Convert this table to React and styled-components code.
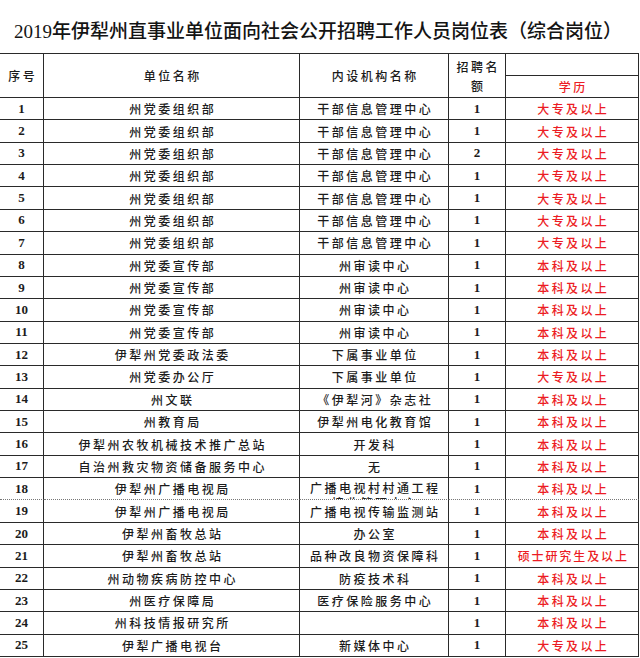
import React from "react";
import styled, { createGlobalStyle } from "styled-components";

const Global = createGlobalStyle`
  html, body { margin: 0; padding: 0; background: #fff; }
  body { width: 640px; height: 658px; overflow: hidden; }
`;

const COLS = "44px 256px 149px 57px 133px";
const ROW_H = 22.36;
const CJK = `"Noto Sans CJK SC", "Noto Sans", sans-serif`;
const NUM = `"Liberation Serif", "Noto Sans CJK SC", serif`;

const Page = styled.div`
  width: 640px;
  height: 658px;
  overflow: hidden;
  background: #fff;
`;

const Title = styled.h1`
  margin: 0;
  height: 53px;
  box-sizing: border-box;
  padding-top: 6px;
  padding-right: 4px;
  display: flex;
  align-items: center;
  justify-content: center;
  font-family: "Liberation Serif", "Noto Sans CJK SC", serif;
  font-size: 19px;
  font-weight: 500;
  color: #141414;
  white-space: nowrap;
`;

const Table = styled.div`
  width: 639px;
  border-top: 1px solid #2a2a2a;
`;

const HeaderRow = styled.div`
  display: grid;
  grid-template-columns: ${COLS};
  height: 44px;
`;

const Row = styled.div`
  display: grid;
  grid-template-columns: ${COLS};
  height: ${ROW_H}px;
`;

const Cell = styled.div`
  box-sizing: border-box;
  border-right: 1px solid #2a2a2a;
  border-bottom: 1px ${(p) => (p.$dotted ? "dotted #777" : "solid #2a2a2a")};
  display: flex;
  flex-direction: column;
  align-items: center;
  justify-content: ${(p) => (p.$top ? "flex-start" : "center")};
  overflow: hidden;
  min-width: 0;
  font-family: ${(p) => (p.$num ? NUM : CJK)};
  font-size: ${(p) => (p.$num ? "13px" : "12px")};
  font-weight: ${(p) => (p.$num ? 700 : 500)};
  letter-spacing: ${(p) => (p.$num ? "0" : "2.5px")};
  color: ${(p) => (p.$red ? "#ec1c24" : "#1b1b1b")};
  text-align: center;
  line-height: ${(p) => (p.$top ? "15px" : "normal")};
  padding-top: ${(p) => (p.$top ? "2px" : "0")};
  padding-left: ${(p) => (p.$num ? "0" : "2.5px")};
  white-space: nowrap;
`;

const HeadCell = styled(Cell)`
  font-size: 12px;
  line-height: 19px;
`;

const SplitCell = styled.div`
  display: grid;
  grid-template-rows: 22px 22px;
  min-width: 0;
`;

const Edu = styled(Cell)`
  letter-spacing: ${(p) => (p.$long ? "1.9px" : "2.4px")};
`;

const rows = [
  ["州党委组织部", ["干部信息管理中心"], "1", "大专及以上"],
  ["州党委组织部", ["干部信息管理中心"], "1", "大专及以上"],
  ["州党委组织部", ["干部信息管理中心"], "2", "大专及以上"],
  ["州党委组织部", ["干部信息管理中心"], "1", "大专及以上"],
  ["州党委组织部", ["干部信息管理中心"], "1", "大专及以上"],
  ["州党委组织部", ["干部信息管理中心"], "1", "大专及以上"],
  ["州党委组织部", ["干部信息管理中心"], "1", "大专及以上"],
  ["州党委宣传部", ["州审读中心"], "1", "本科及以上"],
  ["州党委宣传部", ["州审读中心"], "1", "本科及以上"],
  ["州党委宣传部", ["州审读中心"], "1", "本科及以上"],
  ["州党委宣传部", ["州审读中心"], "1", "本科及以上"],
  ["伊犁州党委政法委", ["下属事业单位"], "1", "本科及以上"],
  ["州党委办公厅", ["下属事业单位"], "1", "大专及以上"],
  ["州文联", ["《伊犁河》杂志社"], "1", "本科及以上"],
  ["州教育局", ["伊犁州电化教育馆"], "1", "本科及以上"],
  ["伊犁州农牧机械技术推广总站", ["开发科"], "1", "本科及以上"],
  ["自治州救灾物资储备服务中心", ["无"], "1", "本科及以上"],
  ["伊犁州广播电视局", ["广播电视村村通工程", "接收管理中心"], "1", "本科及以上"],
  ["伊犁州广播电视局", ["广播电视传输监测站"], "1", "本科及以上"],
  ["伊犁州畜牧总站", ["办公室"], "1", "本科及以上"],
  ["伊犁州畜牧总站", ["品种改良物资保障科"], "1", "硕士研究生及以上"],
  ["州动物疾病防控中心", ["防疫技术科"], "1", "本科及以上"],
  ["州医疗保障局", ["医疗保险服务中心"], "1", "本科及以上"],
  ["州科技情报研究所", [""], "1", "本科及以上"],
  ["伊犁广播电视台", ["新媒体中心"], "1", "大专及以上"],
];

export default function App() {
  return (
    <Page>
      <Global />
      <Title>2019年伊犁州直事业单位面向社会公开招聘工作人员岗位表（综合岗位）</Title>
      <Table>
        <HeaderRow>
          <HeadCell>序号</HeadCell>
          <HeadCell>单位名称</HeadCell>
          <HeadCell>内设机构名称</HeadCell>
          <HeadCell>
            <span>招聘名</span>
            <span>额</span>
          </HeadCell>
          <SplitCell>
            <Cell />
            <Cell $red>学历</Cell>
          </SplitCell>
        </HeaderRow>
        {rows.map((r, i) => {
          const multi = r[1].length > 1;
          const dotted = i === 17;
          return (
            <Row key={i}>
              <Cell $num $dotted={dotted}>{i + 1}</Cell>
              <Cell $dotted={dotted}>{r[0]}</Cell>
              <Cell $dotted={dotted} $top={multi}>
                {r[1].map((line, j) => (
                  <span key={j}>{line}</span>
                ))}
              </Cell>
              <Cell $num $dotted={dotted}>{r[2]}</Cell>
              <Edu $red $dotted={dotted} $long={r[3].length > 6}>{r[3]}</Edu>
            </Row>
          );
        })}
      </Table>
    </Page>
  );
}
